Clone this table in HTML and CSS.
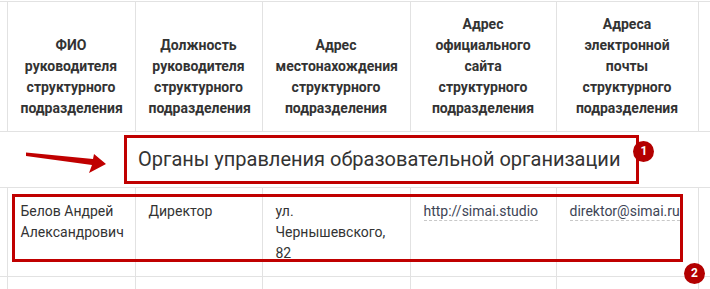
FILE: index.html
```html
<!DOCTYPE html>
<html lang="ru">
<head>
<meta charset="utf-8">
<link rel="stylesheet" href="styles.css">
</head>
<body>
<div class="frame">
  <table class="grid">
    <colgroup>
      <col class="c-stub"><col class="c1"><col class="c2"><col class="c3"><col class="c4"><col class="c5"><col class="c6">
    </colgroup>
    <thead>
      <tr class="head">
        <th class="stub"></th>
        <th>ФИО руководителя структурного подразделения</th>
        <th>Должность руководителя структурного подразделения</th>
        <th>Адрес местонахождения структурного подразделения</th>
        <th>Адрес официального сайта структурного подразделения</th>
        <th>Адреса электронной почты структурного подразделения</th>
        <th></th>
      </tr>
    </thead>
    <tbody>
      <tr class="title-row">
        <td colspan="7" class="title-cell">
          <span class="mark mark-title">Органы управления образовательной организации<span class="badge badge-1">1</span></span>
        </td>
      </tr>
      <tr class="data">
        <td class="stub"></td>
        <td>Белов Андрей Александрович</td>
        <td>Директор</td>
        <td>ул. Чернышевского, 82</td>
        <td><a class="link">http://simai.studio</a></td>
        <td><a class="link">direktor@simai.ru</a></td>
        <td></td>
      </tr>
      <tr class="empty">
        <td class="stub"></td><td></td><td></td><td></td><td></td><td></td><td></td>
      </tr>
    </tbody>
  </table>

  <svg class="arrow" width="90" height="30" viewBox="20 148 90 30" aria-hidden="true">
    <polygon points="26,152.5 93,159 94,154 106,164 89,173 92,165 26,156" fill="#c00000"/>
  </svg>

  <div class="mark mark-row"><span class="badge badge-2">2</span></div>
</div>
</body>
</html>
```

FILE: styles.css
```css
* { box-sizing: border-box; }

html, body {
  margin: 0;
  padding: 0;
  background: #ffffff;
}

body {
  font-family: Roboto, "Noto Sans", "Liberation Sans", sans-serif;
  color: #333333;
}

.frame {
  position: relative;
  width: 710px;
  height: 289px;
  overflow: hidden;
}

.grid {
  border-collapse: collapse;
  table-layout: fixed;
  width: 808px;
  margin-top: 1px;
}

.c-stub { width: 7px; }
.c1 { width: 128px; }
.c2 { width: 127px; }
.c3 { width: 148px; }
.c4 { width: 146px; }
.c5 { width: 142px; }
.c6 { width: 110px; }

.grid th,
.grid td {
  border: 1px solid #e2e2e2;
  padding: 0 13px;
}

.grid .stub {
  border-left: none;
  padding: 0;
}

.head th {
  height: 130px;
  vertical-align: bottom;
  text-align: center;
  font-weight: 700;
  font-size: 14px;
  line-height: 21px;
  color: #333333;
  padding-bottom: 12px;
}

.title-row td.title-cell {
  height: 56px;
  padding: 0 0 0 124px;
  border-left: none;
  vertical-align: middle;
}

.mark {
  border: 3px solid #c00000;
}

.mark-title {
  position: relative;
  display: inline-block;
  padding: 10px 16px 10px 11px;
  font-size: 20px;
  line-height: 23px;
  color: #333333;
  white-space: nowrap;
}

.data td {
  height: 88px;
  vertical-align: top;
  padding-top: 13px;
  padding-bottom: 12px;
  font-size: 14px;
  line-height: 21px;
  color: #333333;
}

.empty td {
  height: 40px;
}

.link {
  color: #3d4455;
  text-decoration: none;
  border-bottom: 1px dashed #c8c8c8;
  padding-bottom: 1px;
}

.arrow {
  position: absolute;
  left: 20px;
  top: 148px;
}

.mark-row {
  position: absolute;
  left: 12px;
  top: 194px;
  width: 671px;
  height: 68px;
}

.badge {
  position: absolute;
  width: 21px;
  height: 21px;
  border-radius: 50%;
  background: #b30000;
  color: #ffffff;
  font-size: 12px;
  font-weight: 700;
  line-height: 21px;
  text-align: center;
  font-family: Roboto, "Liberation Sans", sans-serif;
}

.badge-1 {
  right: -18px;
  top: 3px;
}

.badge-2 {
  right: -25px;
  top: 66px;
}
```
